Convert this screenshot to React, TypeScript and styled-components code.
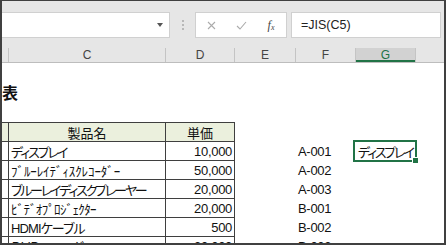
import React from 'react';
import styled, { createGlobalStyle } from 'styled-components';

const GlobalStyle = createGlobalStyle`
  body {
    margin: 0;
    overflow: hidden;
    background: #ffffff;
  }
`;

const CELL_FONT = `"Liberation Sans", "Noto Sans CJK JP", sans-serif`;
const COLUMNS = '7px 157px 69px 61px 60px 60px 1fr';
const LINE = '#3f3f3f';

const Frame = styled.div`
  box-sizing: border-box;
  display: flex;
  flex-direction: column;
  width: 446px;
  height: 245px;
  overflow: hidden;
  border-style: solid;
  border-color: #404040;
  border-width: 1px 2px 2px 2px;
  background: #ffffff;
  font-family: ${CELL_FONT};
`;

const Toolbar = styled.div`
  display: flex;
  flex-direction: column;
  padding-top: 11px;
  background: #e6e6e6;
`;

const FormulaBar = styled.div`
  display: flex;
  align-items: stretch;
  height: 26px;
`;

const NameBox = styled.div`
  box-sizing: border-box;
  display: flex;
  align-items: center;
  justify-content: flex-end;
  width: 168px;
  padding-right: 6px;
  border: 1px solid #d0d0d0;
  border-left: none;
  background: #ffffff;
`;

const Caret = styled.span`
  width: 0;
  height: 0;
  border-left: 3px solid transparent;
  border-right: 3px solid transparent;
  border-top: 4px solid #555555;
`;

const Dots = styled.div`
  display: flex;
  flex-direction: column;
  align-items: center;
  justify-content: center;
  gap: 2px;
  width: 25px;

  > span {
    width: 2px;
    height: 2px;
    border-radius: 1px;
    background: #a8a8a8;
  }
`;

const FuncBox = styled.div`
  box-sizing: border-box;
  display: flex;
  align-items: center;
  width: 92px;
  border: 1px solid #d0d0d0;
  background: #ffffff;
`;

const FuncSlot = styled.span<{ $w: number }>`
  display: flex;
  align-items: center;
  justify-content: center;
  width: ${(p) => p.$w}px;
`;

const Fx = styled.span`
  font-family: "Liberation Serif", serif;
  font-style: italic;
  font-size: 12px;
  color: #444444;

  sub {
    font-size: 8px;
    vertical-align: -1px;
  }
`;

const FormulaInput = styled.div`
  box-sizing: border-box;
  display: flex;
  align-items: center;
  width: 150px;
  margin-left: 4px;
  padding-left: 9px;
  border: 1px solid #d0d0d0;
  background: #ffffff;
  font-size: 12.5px;
  color: #222222;
`;

const HeaderRow = styled.div`
  display: grid;
  grid-template-columns: ${COLUMNS};
  height: 16px;
  margin-top: 9px;
  border-bottom: 1px solid #bdbdbd;
  box-sizing: border-box;
`;

const ColHead = styled.div<{ $selected?: boolean }>`
  box-sizing: border-box;
  display: flex;
  align-items: flex-end;
  justify-content: center;
  margin-top: 1px;
  border-right: 1px solid #c4c4c4;
  font-size: 12px;
  line-height: 13px;
  color: ${(p) => (p.$selected ? '#217346' : '#444444')};
  background: ${(p) => (p.$selected ? '#d2d2d2' : 'transparent')};
  box-shadow: ${(p) => (p.$selected ? 'inset 0 -2px 0 #217346' : 'none')};

  &:last-child {
    border-right: none;
  }
`;

const Sheet = styled.div`
  display: grid;
  grid-template-columns: ${COLUMNS};
  grid-template-rows: 22px;
  grid-auto-rows: 19px;
  background: #ffffff;
`;

type CellProps = {
  $right?: boolean;
  $bottom?: boolean;
  $fill?: boolean;
  $align?: 'left' | 'center' | 'right';
  $spacing?: number;
};

const Cell = styled.div<CellProps>`
  position: relative;
  box-sizing: border-box;
  display: flex;
  align-items: center;
  justify-content: ${(p) =>
    p.$align === 'right' ? 'flex-end' : p.$align === 'center' ? 'center' : 'flex-start'};
  padding: 0 2px;
  white-space: nowrap;
  font-size: 13px;
  color: #111111;
  font-feature-settings: 'palt';
  letter-spacing: ${(p) => p.$spacing ?? -0.3}px;
  background: ${(p) => (p.$fill ? '#ebf0dd' : 'transparent')};
  border-right: ${(p) => (p.$right ? `1px solid ${LINE}` : 'none')};
  border-bottom: ${(p) => (p.$bottom ? `1px solid ${LINE}` : 'none')};
`;

const Title = styled.span`
  position: relative;
  z-index: 1;
  margin: -5px 0 0 -2px;
  font-family: "Noto Sans CJK JP", sans-serif;
  font-weight: 700;
  font-size: 16px;
  color: #111111;
`;

const Selection = styled.div`
  position: absolute;
  top: -2px;
  left: -3px;
  right: -1px;
  bottom: -1px;
  border: 2px solid #217346;
  pointer-events: none;

  &::after {
    content: '';
    position: absolute;
    right: -4px;
    bottom: -4px;
    width: 5px;
    height: 5px;
    background: #217346;
    border: 1px solid #ffffff;
  }
`;

const products = [
  { name: 'ディスプレイ', spacing: -2.1, price: '10,000', code: 'A-001', g: 'ディスプレイ' },
  { name: 'ﾌﾞﾙｰﾚｲﾃﾞｨｽｸﾚｺｰﾀﾞｰ', spacing: -0.1, price: '50,000', code: 'A-002' },
  { name: 'ブルーレイディスクプレーヤー', spacing: -2.2, price: '20,000', code: 'A-003' },
  { name: 'ﾋﾞﾃﾞｵﾌﾟﾛｼﾞｪｸﾀｰ', spacing: -0.6, price: '20,000', code: 'B-001' },
  { name: 'HDMIケーブル', spacing: -0.9, price: '500', code: 'B-002' },
  { name: 'ＤＶＤレコーダー', spacing: -1.4, price: '30,000', code: 'B-003' },
];

const EmptyRow = ({ line }: { line?: boolean }) => (
  <>
    <Cell $bottom={line} />
    <Cell $bottom={line} />
    <Cell $bottom={line} />
    <Cell />
    <Cell />
    <Cell />
    <Cell />
  </>
);

const App = () => {
  return (
    <>
      <GlobalStyle />
      <Frame>
        <Toolbar>
          <FormulaBar>
            <NameBox>
              <Caret />
            </NameBox>
            <Dots>
              <span />
              <span />
              <span />
            </Dots>
            <FuncBox>
              <FuncSlot $w={30}>
                <svg width='9' height='9' viewBox='0 0 9 9'>
                  <path d='M1 1 L8 8 M8 1 L1 8' stroke='#ababab' strokeWidth='1.1' fill='none' />
                </svg>
              </FuncSlot>
              <FuncSlot $w={30}>
                <svg width='11' height='9' viewBox='0 0 11 9'>
                  <path d='M1 5 L4 8 L10 1' stroke='#ababab' strokeWidth='1.1' fill='none' />
                </svg>
              </FuncSlot>
              <FuncSlot $w={30}>
                <Fx>
                  f<sub>x</sub>
                </Fx>
              </FuncSlot>
            </FuncBox>
            <FormulaInput>=JIS(C5)</FormulaInput>
          </FormulaBar>
          <HeaderRow>
            <ColHead />
            <ColHead>C</ColHead>
            <ColHead>D</ColHead>
            <ColHead>E</ColHead>
            <ColHead>F</ColHead>
            <ColHead $selected>G</ColHead>
            <ColHead />
          </HeaderRow>
        </Toolbar>
        <Sheet>
          <EmptyRow />
          <Cell>
            <Title>表</Title>
          </Cell>
          <Cell />
          <Cell />
          <Cell />
          <Cell />
          <Cell />
          <Cell />
          <EmptyRow line />
          <Cell $right $bottom $fill />
          <Cell $right $bottom $fill $align='center' $spacing={0}>
            製品名
          </Cell>
          <Cell $right $bottom $fill $align='center' $spacing={0}>
            単価
          </Cell>
          <Cell />
          <Cell />
          <Cell />
          <Cell />
          {products.map((p) => (
            <React.Fragment key={p.code}>
              <Cell $right $bottom />
              <Cell $right $bottom $spacing={p.spacing}>
                {p.name}
              </Cell>
              <Cell $right $bottom $align='right'>
                {p.price}
              </Cell>
              <Cell />
              <Cell>{p.code}</Cell>
              <Cell $spacing={-2.2}>
                {p.g}
                {p.g && <Selection />}
              </Cell>
              <Cell />
            </React.Fragment>
          ))}
        </Sheet>
      </Frame>
    </>
  );
};

export default App;
